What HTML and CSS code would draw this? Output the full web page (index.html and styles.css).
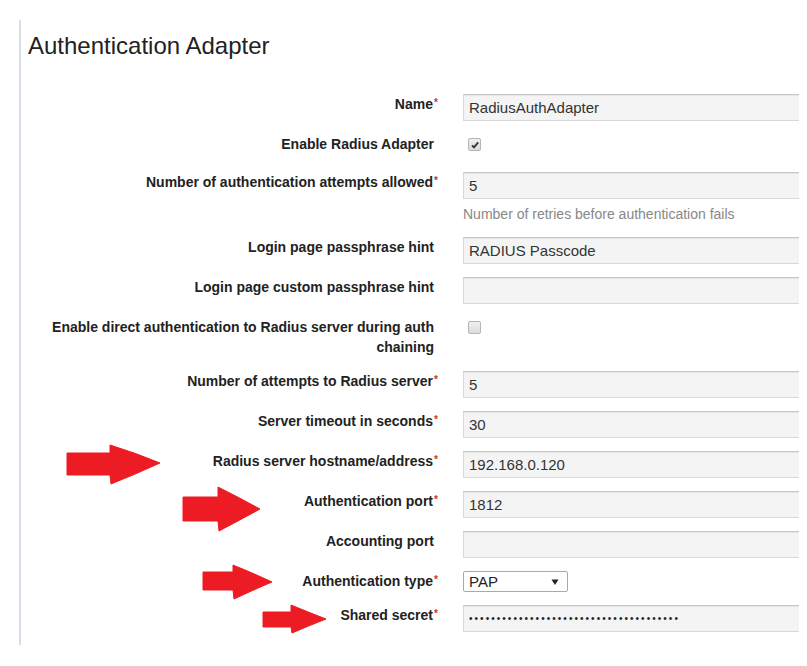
FILE: index.html
```html
<!DOCTYPE html>
<html lang="en">
<head>
    <meta charset="UTF-8">
    <meta name="viewport" content="width=device-width, initial-scale=1.0">
    <title>Authentication Adapter</title>
    <link rel="stylesheet" href="styles.css">
</head>
<body>
    <div class="panel">
        <h1 class="panel-title">Authentication Adapter</h1>
        <form class="adapter-form">
            <div class="form-row">
                <label class="form-label">Name<span class="req">*</span></label>
                <div class="form-control"><input class="field" type="text" value="RadiusAuthAdapter" readonly></div>
            </div>
            <div class="form-row check-row">
                <label class="form-label">Enable Radius Adapter</label>
                <div class="form-control"><span class="checkbox checked"><svg viewBox="0 0 12 12" width="12" height="12"><path d="M3 6.3 L5 8.4 L9.2 3.4" fill="none" stroke="#333" stroke-width="1.8"/></svg></span></div>
            </div>
            <div class="form-row">
                <label class="form-label">Number of authentication attempts allowed<span class="req">*</span></label>
                <div class="form-control">
                    <input class="field" type="text" value="5" readonly>
                    <div class="help-text">Number of retries before authentication fails</div>
                </div>
            </div>
            <div class="form-row">
                <label class="form-label">Login page passphrase hint</label>
                <div class="form-control"><input class="field" type="text" value="RADIUS Passcode" readonly></div>
            </div>
            <div class="form-row">
                <label class="form-label">Login page custom passphrase hint</label>
                <div class="form-control"><input class="field" type="text" value="" readonly></div>
            </div>
            <div class="form-row check-row">
                <label class="form-label">Enable direct authentication to Radius server during auth chaining</label>
                <div class="form-control"><span class="checkbox"></span></div>
            </div>
            <div class="form-row">
                <label class="form-label">Number of attempts to Radius server<span class="req">*</span></label>
                <div class="form-control"><input class="field" type="text" value="5" readonly></div>
            </div>
            <div class="form-row">
                <label class="form-label">Server timeout in seconds<span class="req">*</span></label>
                <div class="form-control"><input class="field" type="text" value="30" readonly></div>
            </div>
            <div class="form-row">
                <label class="form-label">Radius server hostname/address<span class="req">*</span></label>
                <div class="form-control"><input class="field" type="text" value="192.168.0.120" readonly></div>
            </div>
            <div class="form-row">
                <label class="form-label">Authentication port<span class="req">*</span></label>
                <div class="form-control"><input class="field" type="text" value="1812" readonly></div>
            </div>
            <div class="form-row">
                <label class="form-label">Accounting port</label>
                <div class="form-control"><input class="field" type="text" value="" readonly></div>
            </div>
            <div class="form-row">
                <label class="form-label">Authentication type<span class="req">*</span></label>
                <div class="form-control">
                    <div class="select">PAP<svg class="select-arrow" viewBox="0 0 8 8" width="8" height="8"><path d="M0.5 1.5 H7.5 L4 7 Z" fill="#222"/></svg></div>
                </div>
            </div>
            <div class="form-row">
                <label class="form-label">Shared secret<span class="req">*</span></label>
                <div class="form-control"><input class="field secret" type="text" value="&#8226;&#8226;&#8226;&#8226;&#8226;&#8226;&#8226;&#8226;&#8226;&#8226;&#8226;&#8226;&#8226;&#8226;&#8226;&#8226;&#8226;&#8226;&#8226;&#8226;&#8226;&#8226;&#8226;&#8226;&#8226;&#8226;&#8226;&#8226;&#8226;&#8226;&#8226;&#8226;&#8226;&#8226;&#8226;&#8226;&#8226;&#8226;" readonly></div>
            </div>
        </form>

        <!-- red annotation arrows drawn over the screenshot -->
        <svg class="arrow" style="left:66px;top:444px" width="96" height="42" viewBox="0 0 96 42"><path d="M1 9 H44 L44 1 Q70 9 94 19 Q70 30 45 40 L44 31 H1 Z" fill="#ed1c24" stroke="#ed1c24" stroke-linejoin="round"/></svg>
        <svg class="arrow" style="left:182px;top:486px" width="80" height="46" viewBox="0 0 80 46"><path d="M1 11 H36 L36 1 Q58 12 78 23 Q58 34 37 45 L36 35 H1 Z" fill="#ed1c24" stroke="#ed1c24" stroke-linejoin="round"/></svg>
        <svg class="arrow" style="left:202px;top:564px" width="72" height="36" viewBox="0 0 72 36"><path d="M1 8 H31 L31 1 Q51 9 70 18 Q51 26 32 35 L31 26 H1 Z" fill="#ed1c24" stroke="#ed1c24" stroke-linejoin="round"/></svg>
        <svg class="arrow" style="left:262px;top:604px" width="66" height="30" viewBox="0 0 66 30"><path d="M1 8 H29 L29 1 Q46 8 64 15 Q46 22 30 29 L29 23 H1 Z" fill="#ed1c24" stroke="#ed1c24" stroke-linejoin="round"/></svg>
    </div>
</body>
</html>
```

FILE: styles.css
```css
body {
    margin: 0;
    background: #fff;
    font-family: "Liberation Sans", Arial, sans-serif;
    color: #222;
    overflow: hidden;
}

.panel {
    position: relative;
    margin: 20px 0 0 19px;
    width: 778px;
    height: 625px;
    border-left: 2px solid #d6deee;
    overflow: hidden;
}

.panel-title {
    margin: 0;
    padding: 12px 0 0 7px;
    font-size: 24px;
    font-weight: normal;
    line-height: 28px;
    color: #222;
}

.adapter-form {
    margin-top: 34px;
}

.form-row {
    display: grid;
    grid-template-columns: 421px 1fr;
    column-gap: 21px;
    margin-bottom: 13px;
}

.form-label {
    padding-right: 8px;
    text-align: right;
    font-size: 14px;
    font-weight: bold;
    line-height: 20px;
    color: #222;
}

.req {
    display: inline-block;
    width: 8px;
    margin-right: -8px;
    padding-left: 1px;
    text-align: left;
    font-size: 10px;
    line-height: 10px;
    vertical-align: 3px;
    color: #c0392b;
}

.form-control {
    min-width: 0;
}

.field {
    display: block;
    box-sizing: border-box;
    width: 100%;
    height: 27px;
    margin: 0;
    padding: 0 5px;
    border: 1px solid #d8d8d8;
    border-top-color: #c6c6c6;
    border-right: 0;
    border-radius: 0;
    background: #f4f4f4;
    box-shadow: inset 0 1px 1px rgba(0, 0, 0, 0.06);
    font-family: "Liberation Sans", Arial, sans-serif;
    font-size: 15px;
    color: #333;
    outline: none;
}

.field.secret {
    font-size: 10px;
    letter-spacing: 2.05px;
    color: #222;
}

.help-text {
    margin-top: 5px;
    font-size: 14px;
    line-height: 20px;
    color: #888;
}

.check-row {
    min-height: 24px;
    margin-bottom: 14px;
}

.check-row .form-control {
    padding: 4px 0 0 5px;
}

.checkbox {
    display: block;
    box-sizing: border-box;
    width: 13px;
    height: 13px;
    border: 1px solid #b5b5b5;
    border-radius: 2px;
    background: linear-gradient(#f0f0f0, #dcdcdc);
}

.checkbox svg {
    display: block;
    margin: -0.5px 0 0 -0.5px;
}

.select {
    box-sizing: border-box;
    display: flex;
    align-items: center;
    justify-content: space-between;
    width: 105px;
    height: 21px;
    padding: 0 8px 0 5px;
    border: 1px solid #a9a9a9;
    border-radius: 2px;
    background: #fff;
    font-size: 15px;
    color: #222;
}

.arrow {
    position: absolute;
    margin-left: -21px;
    margin-top: -20px;
}
```
